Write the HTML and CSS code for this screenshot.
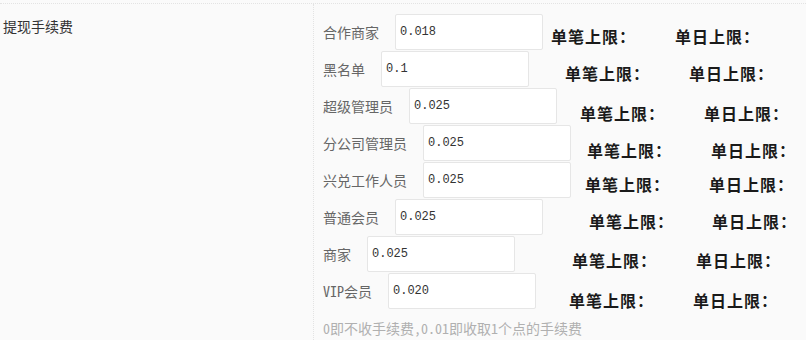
FILE: index.html
```html
<!DOCTYPE html>
<html lang="zh-CN">
<head>
    <meta charset="UTF-8">
    <meta name="viewport" content="width=device-width, initial-scale=1.0">
    <title>提现手续费</title>
    <link rel="stylesheet" href="styles.css">
</head>
<body>
    <div class="form-item">
        <label class="item-label">提现手续费</label>
        <div class="item-block">
            <div class="fee-row">
                <span class="fee-name">合作商家</span>
                <input type="text" class="fee-input" value="0.018">
                <span class="limit">单笔上限：</span><span class="limit">单日上限：</span>
            </div>
            <div class="fee-row">
                <span class="fee-name">黑名单</span>
                <input type="text" class="fee-input" value="0.1">
                <span class="limit">单笔上限：</span><span class="limit">单日上限：</span>
            </div>
            <div class="fee-row">
                <span class="fee-name">超级管理员</span>
                <input type="text" class="fee-input" value="0.025">
                <span class="limit">单笔上限：</span><span class="limit">单日上限：</span>
            </div>
            <div class="fee-row">
                <span class="fee-name">分公司管理员</span>
                <input type="text" class="fee-input" value="0.025">
                <span class="limit">单笔上限：</span><span class="limit">单日上限：</span>
            </div>
            <div class="fee-row">
                <span class="fee-name">兴兑工作人员</span>
                <input type="text" class="fee-input" value="0.025">
                <span class="limit">单笔上限：</span><span class="limit">单日上限：</span>
            </div>
            <div class="fee-row">
                <span class="fee-name">普通会员</span>
                <input type="text" class="fee-input" value="0.025">
                <span class="limit">单笔上限：</span><span class="limit">单日上限：</span>
            </div>
            <div class="fee-row">
                <span class="fee-name">商家</span>
                <input type="text" class="fee-input" value="0.025">
                <span class="limit">单笔上限：</span><span class="limit">单日上限：</span>
            </div>
            <div class="fee-row">
                <span class="fee-name">VIP会员</span>
                <input type="text" class="fee-input" value="0.020">
                <span class="limit">单笔上限：</span><span class="limit">单日上限：</span>
            </div>
            <p class="hint">0即不收手续费,0.01即收取1个点的手续费</p>
        </div>
    </div>
</body>
</html>
```

FILE: styles.css
```css
body {
    margin: 0;
    background-color: #fafafa;
    font: normal 14px "Noto Sans Mono CJK SC", "Noto Sans CJK SC", sans-serif;
    color: #333;
}

.form-item {
    display: flex;
    margin-top: 3px;
    border-top: 1px dotted #e3e3e3;
    min-height: 336px;
}

.item-label {
    width: 310px;
    padding: 12px 0 0 3px;
    line-height: 20px;
    color: #333;
}

.item-block {
    flex: 1;
    border-left: 1px dotted #e3e3e3;
    padding: 10px 0 0 9px;
}

.fee-row {
    display: flex;
    align-items: flex-start;
    height: 36px;
    margin-bottom: 1px;
}

.fee-name {
    line-height: 36px;
    margin-right: 16px;
    color: #666;
    white-space: nowrap;
}

.fee-input {
    box-sizing: border-box;
    width: 148px;
    height: 36px;
    margin: 0;
    padding: 0 4px;
    border: 1px solid #e6e6e6;
    border-radius: 2px;
    background: #fff;
    font: 12px "Liberation Mono", monospace;
    color: #333;
    outline: none;
}

.limit {
    font: bold 16px "Noto Sans CJK TC", "Noto Sans CJK SC", sans-serif;
    letter-spacing: 1px;
    line-height: 20px;
    color: #1a1a1a;
    white-space: nowrap;
}

.limit + .limit {
    margin-left: 39px;
}

/* each row sits a bit differently in the original page */
.fee-row:nth-child(1) .fee-input + .limit { margin: 12px 0 0 8px; }
.fee-row:nth-child(2) .fee-input + .limit { margin: 12px 0 0 36px; }
.fee-row:nth-child(3) .fee-input + .limit { margin: 15px 0 0 23px; }
.fee-row:nth-child(4) .fee-input + .limit { margin: 15px 0 0 16px; }
.fee-row:nth-child(5) .fee-input + .limit { margin: 12px 0 0 14px; }
.fee-row:nth-child(6) .fee-input + .limit { margin: 12px 0 0 46px; }
.fee-row:nth-child(7) .fee-input + .limit { margin: 14px 0 0 57px; }
.fee-row:nth-child(8) .fee-input + .limit { margin: 17px 0 0 33px; }

.fee-row:nth-child(1) .limit + .limit { margin-top: 12px; }
.fee-row:nth-child(2) .limit + .limit { margin-top: 12px; }
.fee-row:nth-child(3) .limit + .limit { margin-top: 15px; }
.fee-row:nth-child(4) .limit + .limit { margin-top: 15px; }
.fee-row:nth-child(5) .limit + .limit { margin-top: 12px; }
.fee-row:nth-child(6) .limit + .limit { margin-top: 12px; margin-left: 38px; }
.fee-row:nth-child(7) .limit + .limit { margin-top: 14px; }
.fee-row:nth-child(8) .limit + .limit { margin-top: 17px; }

.hint {
    margin: 9px 0 0;
    line-height: 20px;
    color: #b0b0b0;
}
```
